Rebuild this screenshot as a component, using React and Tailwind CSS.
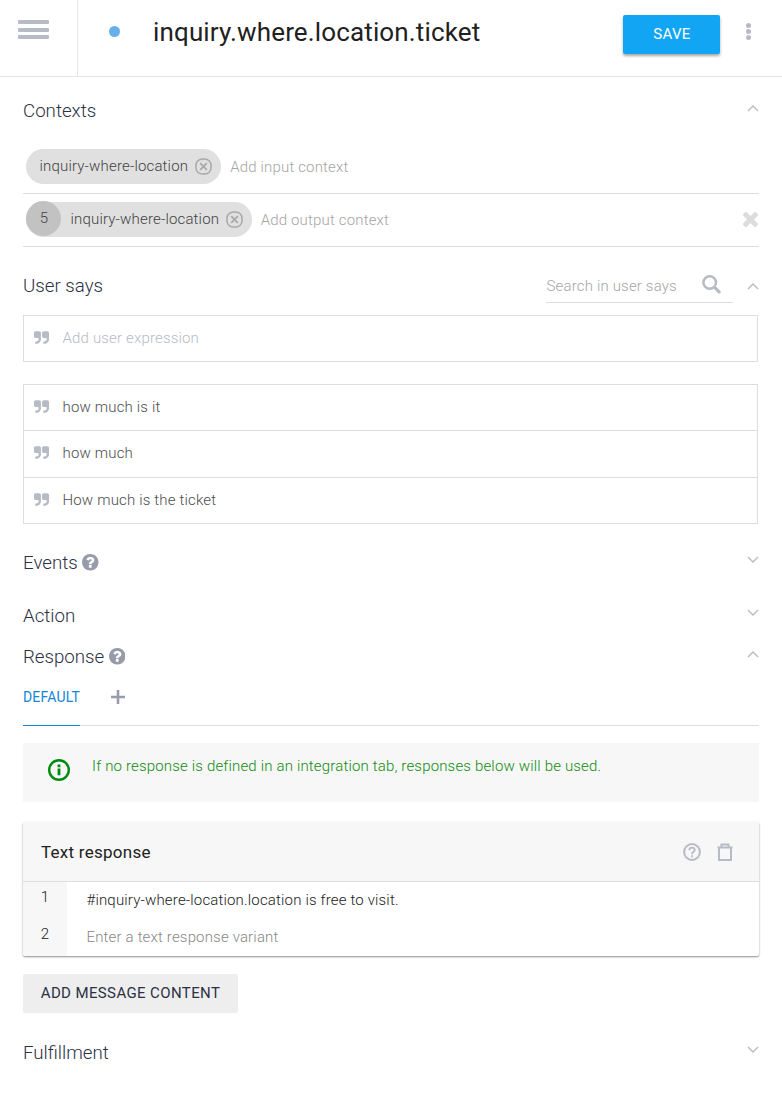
import { useState } from "react";

const phrases = ["how much is it", "how much", "How much is the ticket"];

function QuoteIcon() {
  return (
    <svg viewBox="64 128 1664 1408" fill="#b7bbc5" className="mb-0.5 h-[13px] w-[15px] shrink-0">
      <path d="M832 320v704q0 104-40.5 198.5t-109.5 163.5-163.5 109.5-198.5 40.5h-64q-26 0-45-19t-19-45v-128q0-26 19-45t45-19h64q106 0 181-75t75-181v-32q0-40-28-68t-68-28h-224q-80 0-136-56t-56-136v-384q0-80 56-136t136-56h384q80 0 136 56t56 136zm896 0v704q0 104-40.5 198.5t-109.5 163.5-163.5 109.5-198.5 40.5h-64q-26 0-45-19t-19-45v-128q0-26 19-45t45-19h64q106 0 181-75t75-181v-32q0-40-28-68t-68-28h-224q-80 0-136-56t-56-136v-384q0-80 56-136t136-56h384q80 0 136 56t56 136z" />
    </svg>
  );
}

function HelpIcon() {
  return (
    <svg viewBox="128 128 1536 1536" fill="#979cab" className="mb-px ml-[4.5px] size-[16.5px] shrink-0">
      <path d="M1024 1376v-192q0-14-9-23t-23-9h-192q-14 0-23 9t-9 23v192q0 14 9 23t23 9h192q14 0 23-9t9-23zm256-672q0-88-55.5-163t-138.5-116-170-41q-243 0-371 213-15 24 8 42l132 100q7 6 19 6 16 0 25-12 53-68 86-92 34-24 86-24 48 0 85.5 26t37.5 59q0 38-20 61t-68 45q-63 28-115.5 86.5t-52.5 125.5v36q0 14 9 23t23 9h192q14 0 23-9t9-23q0-19 21.5-49.5t54.5-49.5q32-18 49-28.5t46-35 44.5-48 28-60.5 12.5-81zm384 192q0 209-103 385.5t-279.5 279.5-385.5 103-385.5-103-279.5-279.5-103-385.5 103-385.5 279.5-279.5 385.5-103 385.5 103 279.5 279.5 103 385.5z" />
    </svg>
  );
}

function ClearIcon() {
  return (
    <svg viewBox="302 302 1188 1188" fill="#dcdcdc" className="mr-[1.5px] mb-px size-[15px]">
      <path d="M1490 1322q0 40-28 68l-136 136q-28 28-68 28t-68-28l-294-294-294 294q-28 28-68 28t-68-28l-136-136q-28-28-28-68t28-68l294-294-294-294q-28-28-28-68t28-68l136-136q28-28 68-28t68 28l294 294 294-294q28-28 68-28t68 28l136 136q28 28 28 68t-28 68l-294 294 294 294q28 28 28 68z" transform="translate(0 -64)" />
    </svg>
  );
}

function RemoveIcon() {
  return (
    <svg viewBox="0 0 17 17" fill="none" stroke="#a9a9a9" strokeWidth="1.5" className="size-[17px]">
      <rect x="0.9" y="0.9" width="15.2" height="15.2" rx="6.6" />
      <path d="M5.2 5.2l6.6 6.6M11.8 5.2l-6.6 6.6" strokeWidth="1.7" />
    </svg>
  );
}

function SearchIcon() {
  return (
    <svg viewBox="0 0 19 19" fill="none" stroke="#b7bbc5" className="mb-1 ml-[2.5px] size-[19px]">
      <circle cx="7.7" cy="7.5" r="6.3" strokeWidth="2.5" />
      <path d="M12.2 12l1.8 1.8" strokeWidth="2.2" />
      <path d="M13.6 13.4l3.5 3.5" strokeWidth="3.2" strokeLinecap="round" />
    </svg>
  );
}

function InfoIcon() {
  return (
    <svg viewBox="0 0 22 22" fill="none" stroke="#008a0e" className="mt-[2.5px] ml-[1px] size-[22px]">
      <circle cx="11" cy="11" r="9.8" strokeWidth="2.4" />
      <path d="M11 9.6v6.6M11 5.6v2.6" strokeWidth="2.8" />
    </svg>
  );
}

function HelpOutlineIcon() {
  return (
    <svg viewBox="0 0 18 18" fill="none" stroke="#b7bbc5" strokeWidth="2" className="mr-4 size-[18px]">
      <circle cx="9" cy="9" r="7.9" />
      <path d="M6.3 7.2c0-3.5 5.4-3.3 5.4-.2C11.7 8.7 9 9 9 11.2M9 12.3v2" strokeWidth="1.8" />
    </svg>
  );
}

function TrashIcon() {
  return (
    <svg viewBox="0 0 16 18" fill="none" stroke="#b7bbc5" strokeWidth="2" className="mr-[0.5px] h-[18px] w-4">
      <path d="M2 5v12h12V5" />
      <path d="M.5 4.5h15M4.5 4V1.5h7V4" />
    </svg>
  );
}

function Chevron({ open }) {
  return (
    <svg viewBox="0 0 12 8" fill="none" stroke="#b7bbc5" strokeWidth="1.4" className="h-2 w-3">
      <path d={open ? "M1 6L6 1L11 6" : "M1 1L6 6L11 1"} />
    </svg>
  );
}

function SectionTitle({ title, help, open }) {
  return (
    <div className="flex h-6 items-center justify-between">
      <h2 className="flex items-center text-[18.7px] font-light text-[#2b3044]">
        {title}
        {help && <HelpIcon />}
      </h2>
      <span className={open ? "mb-[5px] flex" : "mb-1.5 flex"}>
        <Chevron open={open} />
      </span>
    </div>
  );
}

function Chip({ lifespan, name }) {
  return (
    <div className="flex h-[35px] items-center rounded-full bg-[#e0e0e0] pr-[9px] text-[15px] font-light text-[#424242]">
      {lifespan && (
        <span className="-mt-0.5 flex size-[35px] items-center justify-center rounded-full bg-[#c2c2c2] pb-px pl-px">
          {lifespan}
        </span>
      )}
      <span className={lifespan ? "mr-[6.5px] ml-[9.5px]" : "mr-[7px] ml-[13.5px]"}>{name}</span>
      <RemoveIcon />
    </div>
  );
}

export default function App() {
  const [search, setSearch] = useState("");
  const [expression, setExpression] = useState("");
  const [input, setInput] = useState("");
  const [output, setOutput] = useState("");
  const [variant, setVariant] = useState("");

  return (
    <div className="h-[1095px] w-[782px] overflow-hidden bg-white font-['Roboto',sans-serif] text-[15px] font-light">
      <header className="flex h-[77px] border-b border-[#e3e4e5]">
        <button className="flex w-[78px] flex-col items-start gap-[3.5px] border-r border-[#e8e8e8] pt-5 pl-[18px]">
          <span className="h-1 w-[31px] rounded-[1px] bg-[#b7bbc5]" />
          <span className="h-1 w-[31px] rounded-[1px] bg-[#b7bbc5]" />
          <span className="h-1 w-[31px] rounded-[1px] bg-[#b7bbc5]" />
        </button>
        <span className="mt-[26px] ml-[31px] size-[11px] rounded-full bg-[#66afe9]" />
        <h1 className="mt-[14px] ml-[33px] flex-1 text-[26px] leading-9 font-normal tracking-[0.14px] text-[#212121]">
          inquiry.where.location.ticket
        </h1>
        <button className="mt-[15px] h-[39px] w-[97px] rounded-[2px] bg-[#12a5f4] pl-px text-[15px] font-normal tracking-[0.3px] text-white shadow-[0_2px_3px_rgba(0,0,0,0.35)]">
          SAVE
        </button>
        <button className="mt-[23px] mr-[31px] ml-[26px] flex h-[17px] flex-col justify-between">
          <span className="size-[5px] rounded-full bg-[#b7bbc5]" />
          <span className="size-[5px] rounded-full bg-[#b7bbc5]" />
          <span className="size-[5px] rounded-full bg-[#b7bbc5]" />
        </button>
      </header>

      <main className="px-[23px] tracking-[0.17px]">
        <section className="pt-[22px]">
          <div className="tracking-normal">
            <SectionTitle title="Contexts" open />
          </div>
          <div className="mt-[17px] flex h-[54px] items-center border-b border-[#dedede] pl-[3px]">
            <Chip name="inquiry-where-location" />
            <input
              className="mt-0.5 ml-[9px] flex-1 outline-none placeholder:text-[#a5a5a5]"
              placeholder="Add input context"
              value={input}
              onChange={(e) => setInput(e.target.value)}
            />
          </div>
          <div className="flex h-[53px] items-center border-b border-[#dedede] pb-px pl-[3px]">
            <Chip lifespan="5" name="inquiry-where-location" />
            <input
              className="mt-0.5 ml-[9px] flex-1 outline-none placeholder:text-[#a5a5a5]"
              placeholder="Add output context"
              value={output}
              onChange={(e) => setOutput(e.target.value)}
            />
            <ClearIcon />
          </div>
        </section>

        <section className="pt-[23px]">
          <div className="flex h-[33px] items-center">
            <h2 className="flex-1 text-[18.7px] font-light tracking-normal text-[#2b3044]">User says</h2>
            <div className="flex h-[33px] w-[187px] items-center border-b border-[#dedede]">
              <input
                className="w-[153px] pl-[0.5px] outline-none placeholder:text-[#a5a5a5]"
                placeholder="Search in user says"
                value={search}
                onChange={(e) => setSearch(e.target.value)}
              />
              <SearchIcon />
            </div>
            <span className="ml-[14px] flex">
              <Chevron open />
            </span>
          </div>

          <div className="mt-3 mr-px flex h-[47px] items-center border border-[#dedede] pl-[10px]">
            <QuoteIcon />
            <input
              className="ml-[13.5px] flex-1 outline-none placeholder:text-[#b7bbc5]"
              placeholder="Add user expression"
              value={expression}
              onChange={(e) => setExpression(e.target.value)}
            />
          </div>

          <ul className="mt-[22px] mr-px h-[140px] divide-y divide-[#dedede] border border-[#dedede]">
            {phrases.map((p) => (
              <li key={p} className="flex h-[46.33px] items-center pb-px pl-[10px] text-[#4d4d4d]">
                <QuoteIcon />
                <span className="ml-[13.5px]">{p}</span>
              </li>
            ))}
          </ul>
        </section>

        <section className="pt-[27px] tracking-normal">
          <SectionTitle title="Events" help />
        </section>
        <section className="pt-[29px] tracking-normal">
          <SectionTitle title="Action" />
        </section>

        <section className="pt-[17px]">
          <div className="tracking-normal">
            <SectionTitle title="Response" help open />
          </div>
          <div className="mt-[13px] flex h-[44px] border-b border-[#dedede]">
            <button className="-mb-px flex w-[57px] border-b border-[#1486e0] pt-[5px] text-[14px] font-normal text-[#1486d8]">
              DEFAULT
            </button>
            <button className="flex h-[30px] items-center pl-[31px]">
              <svg viewBox="0 0 14 14" stroke="#979cab" strokeWidth="2.6" className="size-[14px]">
                <path d="M7 0v14M0 7h14" />
              </svg>
            </button>
          </div>

          <div className="mt-[17px] flex h-[59px] bg-[#f7f7f7] pt-[13px] pl-6 text-[#118a11]">
            <InfoIcon />
            <span className="ml-[22px] leading-5">
              If no response is defined in an integration tab, responses below will be used.
            </span>
          </div>

          <div className="mt-5 h-[134px] overflow-hidden rounded-[2px] shadow-[0_1px_2px_rgba(0,0,0,0.45)]">
            <div className="flex h-[60px] items-center border-b border-[#dedede] bg-[#f7f7f7] pr-[26px] pl-[18px]">
              <h3 className="flex-1 pt-0.5 text-[17px] font-normal tracking-[0.26px] text-[#212121]">
                Text response
              </h3>
              <HelpOutlineIcon />
              <TrashIcon />
            </div>
            <div className="flex h-[74px]">
              <div className="w-[44px] bg-[#f7f7f7] text-center leading-[37px] text-[#212121]">
                <div className="-mt-[3px]">1</div>
                <div>2</div>
              </div>
              <div className="flex-1 pl-5 leading-[37px] text-[#212121]">
                <div className="-ml-[0.5px]">#inquiry-where-location.location is free to visit.</div>
                <input
                  className="-ml-[0.5px] block h-[37px] w-full outline-none placeholder:text-[#878787]"
                  placeholder="Enter a text response variant"
                  value={variant}
                  onChange={(e) => setVariant(e.target.value)}
                />
              </div>
            </div>
          </div>

          <button className="mt-[18px] h-[39px] w-[215px] rounded-[2px] bg-[#eeeeee] text-[15px] font-normal tracking-[0.38px] text-[#2b3044]">
            ADD MESSAGE CONTENT
          </button>
        </section>

        <section className="pt-[28px] tracking-normal">
          <SectionTitle title="Fulfillment" />
        </section>
      </main>
    </div>
  );
}
